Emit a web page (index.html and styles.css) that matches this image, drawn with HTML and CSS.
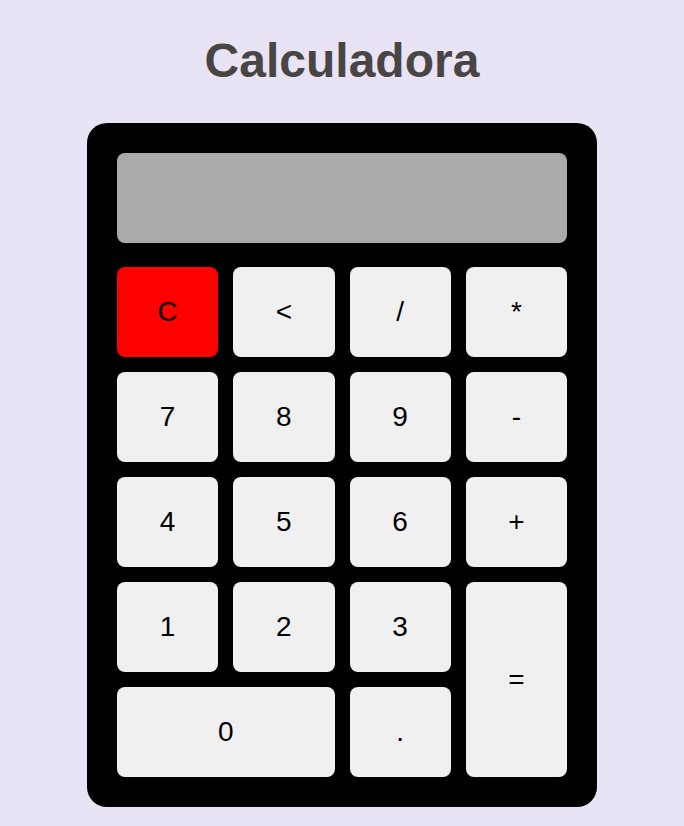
FILE: index.html
```html
<!DOCTYPE html>
<html lang="es">
<head>
<meta charset="utf-8">
<title>Calculadora</title>
<link rel="stylesheet" href="styles.css">
</head>
<body>
<h1 class="title">Calculadora</h1>
<div class="calculator">
  <div class="display"></div>
  <div class="keys">
    <button class="key key-clear">C</button>
    <button class="key">&lt;</button>
    <button class="key">/</button>
    <button class="key">*</button>
    <button class="key">7</button>
    <button class="key">8</button>
    <button class="key">9</button>
    <button class="key">-</button>
    <button class="key">4</button>
    <button class="key">5</button>
    <button class="key">6</button>
    <button class="key">+</button>
    <button class="key">1</button>
    <button class="key">2</button>
    <button class="key">3</button>
    <button class="key key-equals">=</button>
    <button class="key key-zero">0</button>
    <button class="key">.</button>
  </div>
</div>
</body>
</html>
```

FILE: styles.css
```css
html, body {
  margin: 0;
  padding: 0;
}
body {
  background: #e8e4f6;
  font-family: "Liberation Sans", Arial, sans-serif;
  display: flex;
  flex-direction: column;
  align-items: center;
  min-height: 826px;
}
.title {
  margin: 34px 0 35px;
  font-size: 48px;
  font-weight: bold;
  color: #4a4545;
  line-height: 54px;
}
.calculator {
  width: 450px;
  padding: 30px;
  background: #000;
  border-radius: 20px;
}
.display {
  height: 90px;
  background: #aaaaaa;
  border-radius: 8px;
  margin-bottom: 24px;
}
.keys {
  display: grid;
  grid-template-columns: repeat(4, 1fr);
  grid-auto-rows: 90px;
  gap: 15px;
}
.key {
  border: none;
  border-radius: 8px;
  background: #f0f0f0;
  color: #000;
  font-family: "Liberation Sans", Arial, sans-serif;
  font-size: 28px;
  display: flex;
  align-items: center;
  justify-content: center;
  padding: 0;
}
.key-clear {
  background: #ff0000;
}
.key-equals {
  grid-column: 4;
  grid-row: 4 / span 2;
}
.key-zero {
  grid-column: 1 / span 2;
}
```
